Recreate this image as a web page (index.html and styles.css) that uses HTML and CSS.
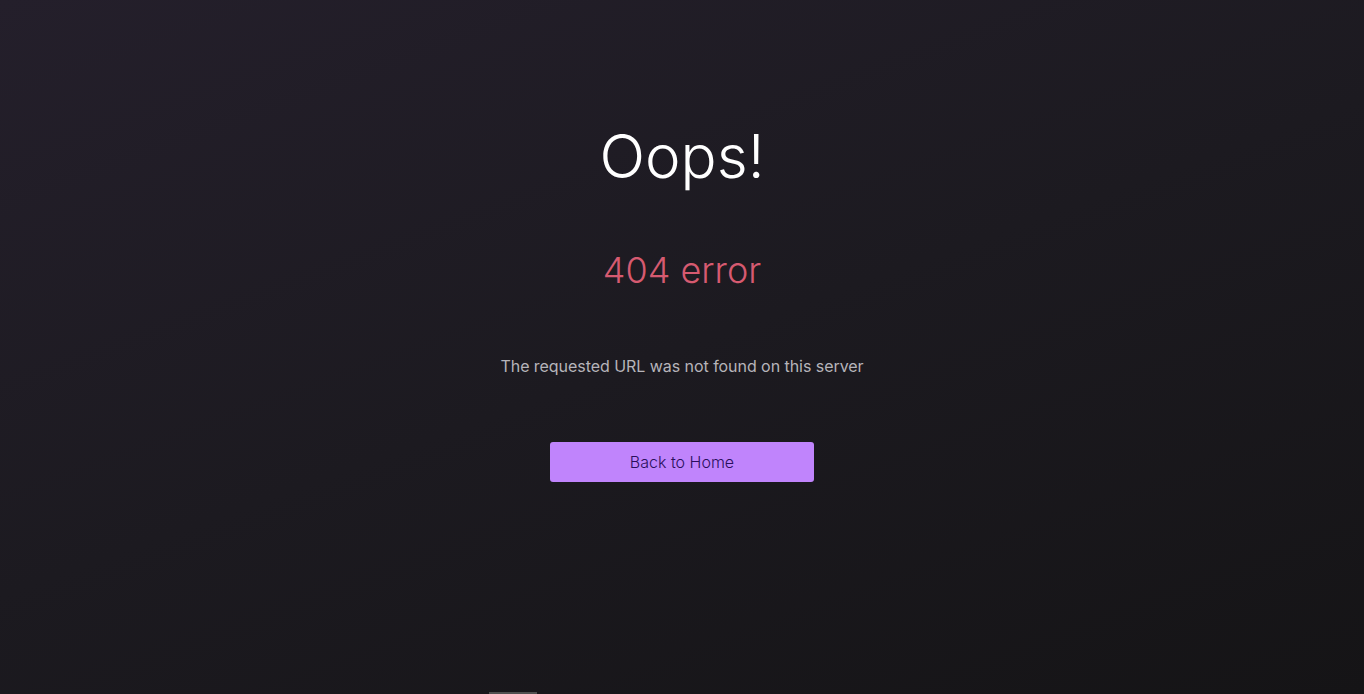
FILE: index.html
```html
<!DOCTYPE html>
<html lang="en">
<head>
<meta charset="utf-8">
<title>404</title>
<link rel="stylesheet" href="styles.css">
</head>
<body>
<main class="page">
  <h1 class="title">Oops!</h1>
  <h2 class="code">404 error</h2>
  <p class="message">The requested URL was not found on this server</p>
  <a class="home-btn" href="#">Back to Home</a>
</main>
<div class="scroll-nub"></div>
</body>
</html>
```

FILE: styles.css
```css
html, body {
  margin: 0;
  padding: 0;
  height: 100%;
}
body {
  background: linear-gradient(160deg, #241f2b 0%, #1c1a20 50%, #151416 100%);
  font-family: Inter, "Noto Sans", sans-serif;
  overflow: hidden;
  position: relative;
}
.page {
  display: flex;
  flex-direction: column;
  align-items: center;
  padding-top: 120px;
}
.title {
  margin: 0;
  font-size: 60px;
  font-weight: 300;
  color: #ffffff;
  line-height: 72px;
}
.code {
  margin: 56px 0 0;
  font-size: 36px;
  font-weight: 300;
  color: #d65a70;
  line-height: 44px;
}
.message {
  margin: 62px 0 0;
  font-size: 16px;
  color: #b6b4ba;
  line-height: 24px;
  letter-spacing: -0.05px;
}
.home-btn {
  margin-top: 64px;
  display: flex;
  align-items: center;
  justify-content: center;
  width: 264px;
  height: 40px;
  border-radius: 3px;
  background: #c084fc;
  color: #2a0f5c;
  font-size: 16px;
  font-weight: 300;
  text-decoration: none;
}
.scroll-nub {
  position: absolute;
  left: 489px;
  bottom: 0;
  width: 48px;
  height: 2px;
  background: #505050;
}
```
